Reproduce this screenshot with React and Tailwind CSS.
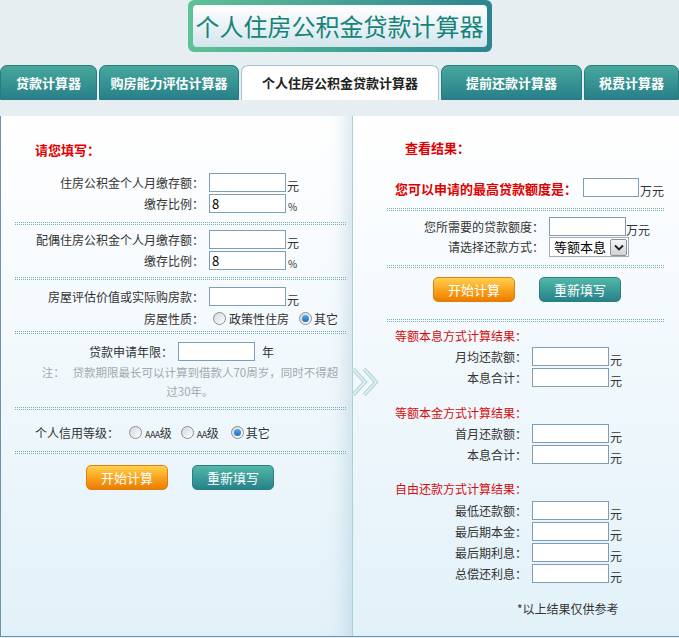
const FONT = "font-[family-name:'Noto_Sans_CJK_SC','Noto_Sans',sans-serif]";

function Box({ value = "", w = "w-[77px]" }) {
  return (
    <input
      readOnly
      value={value}
      className={`${w} h-[19px] shrink-0 border border-[#7f9db9] bg-white px-[2px] text-[13px] leading-[17px] text-black outline-none`}
    />
  );
}

function Field({ label, lw, value = "", unit, small }) {
  return (
    <div className="flex h-[21px]">
      <div className={`${lw} shrink-0 pr-[5px] text-right leading-[19px] whitespace-nowrap`}>{label}</div>
      <Box value={value} />
      {unit && (
        <span className={small ? "pl-[2px] pt-[4px] text-[10px] leading-[17px]" : "pl-[1px] pt-[3px] leading-[19px]"}>
          {unit}
        </span>
      )}
    </div>
  );
}

function Radio({ checked }) {
  return (
    <span className="flex h-[13px] w-[13px] shrink-0 items-center justify-center rounded-full border border-[#8a8f94] bg-linear-to-br from-[#d4d6d8] to-white">
      {checked && <span className="h-[7px] w-[7px] rounded-full bg-linear-to-b from-[#55a8e8] to-[#1a6fc0]" />}
    </span>
  );
}

function Dots({ cls }) {
  return <div className={`${cls} h-[3px] border-y border-dotted border-[#78b0b2]`} />;
}

function OrangeBtn() {
  return (
    <button className="h-[25px] w-[82px] rounded-[5px] border border-[#e0800c] bg-linear-to-b from-[#ffd04c] via-[#f9a51c] to-[#ec7c00] text-[13px] text-white">
      开始计算
    </button>
  );
}

function TealBtn() {
  return (
    <button className="h-[25px] w-[82px] rounded-[5px] border border-[#2b7f80] bg-linear-to-b from-[#52b8a8] to-[#26828a] text-[13px] text-white">
      重新填写
    </button>
  );
}

function Tab({ label, w, active }) {
  return active ? (
    <div className={`${w} flex items-center justify-center rounded-t-[7px] border border-b-0 border-[#a8c3cb] bg-white text-[13px] font-bold text-[#222]`}>
      {label}
    </div>
  ) : (
    <div className={`${w} flex items-center justify-center rounded-t-[7px] border border-[#2a7b7e] bg-linear-to-b from-[#47a89c] to-[#27808a] text-[13px] font-bold text-white`}>
      {label}
    </div>
  );
}

export default function App() {
  return (
    <div className={`${FONT} h-[638px] w-[679px] overflow-hidden bg-[#e6eef1] text-[12px] text-[#333]`}>
      {/* title banner */}
      <div className="flex justify-center">
        <div className="h-[52px] w-[304px] rounded-[6px] bg-linear-to-r from-[#5fc196] to-[#2a8590] p-[5px]">
          <div className="flex h-full items-center justify-center rounded-[4px] bg-linear-to-b from-white to-[#d3e5ec] text-[24px] text-[#17837a]">
            个人住房公积金贷款计算器
          </div>
        </div>
      </div>

      {/* tabs */}
      <div className="mt-[13px] flex h-[35px] gap-[2px]">
        <Tab label="贷款计算器" w="w-[97px]" />
        <Tab label="购房能力评估计算器" w="w-[140px]" />
        <Tab label="个人住房公积金贷款计算器" w="w-[198px]" active />
        <Tab label="提前还款计算器" w="w-[141px]" />
        <Tab label="税费计算器" w="w-[95px]" />
      </div>
      <div className="h-[16px]" />

      {/* panel */}
      <div className="relative flex h-[521px] border-b border-[#6f93a4]">
        {/* left */}
        <div className="w-[352px] shrink-0 border-l border-[#6f93a4] bg-linear-to-b from-white to-[#e2f1f9] pt-[24px] shadow-[inset_-22px_0_18px_-16px_rgba(140,180,200,0.35)]">
          <div className="ml-[34px] h-[20px] text-[13px] font-bold leading-[20px] text-[#e00000]">请您填写：</div>

          <div className="mt-[13px]">
            <Field label="住房公积金个人月缴存额：" lw="w-[208px]" unit="元" />
            <Field label="缴存比例：" lw="w-[208px]" value="8" unit="%" small />
          </div>
          <Dots cls="ml-[14px] mt-[7px] w-[331px]" />

          <div className="mt-[5px]">
            <Field label="配偶住房公积金个人月缴存额：" lw="w-[208px]" unit="元" />
            <Field label="缴存比例：" lw="w-[208px]" value="8" unit="%" small />
          </div>
          <Dots cls="ml-[14px] mt-[5px] w-[331px]" />

          <div className="mt-[7px]">
            <Field label="房屋评估价值或实际购房款：" lw="w-[208px]" unit="元" />
            <div className="flex h-[21px] items-center">
              <div className="w-[208px] shrink-0 pr-[5px] text-right">房屋性质：</div>
              <span className="ml-[4px]"><Radio /></span>
              <span className="ml-[3px]">政策性住房</span>
              <span className="ml-[10px]"><Radio checked /></span>
              <span className="ml-[2px]">其它</span>
            </div>
          </div>
          <Dots cls="ml-[14px] mt-[2px] w-[331px]" />

          <div className="mt-[8px]">
            <div className="flex h-[21px]">
              <div className="w-[177px] shrink-0 pr-[5px] text-right leading-[19px]">贷款申请年限：</div>
              <Box />
              <span className="pl-[7px] leading-[19px]">年</span>
            </div>
            <div className="ml-[30px] w-[318px] text-center text-[11.5px] leading-[19px] text-[#a3a8ab]">
              <div className="whitespace-nowrap">注：&nbsp;&nbsp;&nbsp;贷款期限最长可以计算到借款人70周岁，同时不得超</div>
              <div>过30年。</div>
            </div>
          </div>
          <Dots cls="ml-[14px] mt-[6px] w-[331px]" />

          <div className="mt-[12px] flex h-[21px] items-center pl-[34px]">
            <span>个人信用等级：</span>
            <span className="ml-[10px]"><Radio /></span>
            <span className="ml-[3px]"><span className="text-[9px] tracking-[-0.5px]">AAA</span>级</span>
            <span className="ml-[9px]"><Radio /></span>
            <span className="ml-[3px]"><span className="text-[9px] tracking-[-0.5px]">AA</span>级</span>
            <span className="ml-[12px]"><Radio checked /></span>
            <span className="ml-[2px]">其它</span>
          </div>
          <Dots cls="ml-[14px] mt-[8px] w-[331px]" />

          <div className="ml-[85px] mt-[11px] flex gap-[24px]">
            <OrangeBtn />
            <TealBtn />
          </div>
        </div>

        {/* right */}
        <div className="flex-1 border-l border-[#aacfd5] bg-linear-to-b from-white to-[#e2f1f9] pt-[22px]">
          <div className="ml-[52px] h-[20px] text-[13px] font-bold leading-[20px] text-[#e00000]">查看结果：</div>

          <div className="mt-[20px] flex h-[21px] pl-[42px]">
            <span className="w-[188px] shrink-0 text-[13px] font-bold leading-[21px] text-[#e00000] whitespace-nowrap">您可以申请的最高贷款额度是：</span>
            <Box w="w-[56px]" />
            <span className="pl-[1px] pt-[3px] leading-[19px]">万元</span>
          </div>
          <Dots cls="ml-[34px] mt-[9px] w-[277px]" />

          <div className="mt-[6px]">
            <div className="flex h-[20px]">
              <div className="w-[196px] shrink-0 pr-[5px] text-right leading-[19px]">您所需要的贷款额度：</div>
              <Box />
              <span className="pt-[3px] leading-[19px]">万元</span>
            </div>
            <div className="flex h-[20px] items-center">
              <div className="w-[196px] shrink-0 pr-[5px] text-right">请选择还款方式：</div>
              <div className="flex h-[20px] w-[80px] items-center justify-between border border-[#a5acb2] bg-white pl-[4px] pr-[1px]">
                <span className="text-[13px] leading-[18px] text-black">等额本息</span>
                <span className="flex h-[17px] w-[17px] items-center justify-center rounded-[2px] border border-[#8c9196] bg-linear-to-b from-[#f6f6f6] to-[#cfd2d5]">
                  <svg width="10" height="7" viewBox="0 0 10 7">
                    <path d="M1 1.5 L5 5.5 L9 1.5" fill="none" stroke="#222" strokeWidth="1.8" />
                  </svg>
                </span>
              </div>
            </div>
          </div>
          <Dots cls="ml-[34px] mt-[8px] w-[277px]" />

          <div className="ml-[80px] mt-[9px] flex gap-[24px]">
            <OrangeBtn />
            <TealBtn />
          </div>
          <Dots cls="ml-[34px] mt-[17px] w-[277px]" />

          <div className="ml-[42px] mt-[4px] h-[20px] leading-[20px] text-[#d60c0c]">等额本息方式计算结果：</div>
          <div className="mt-[1px]">
            <Field label="月均还款额：" lw="w-[179px]" unit="元" />
            <Field label="本息合计：" lw="w-[179px]" unit="元" />
          </div>

          <div className="ml-[42px] mt-[14px] h-[20px] leading-[20px] text-[#d60c0c]">等额本金方式计算结果：</div>
          <div className="mt-[1px]">
            <Field label="首月还款额：" lw="w-[179px]" unit="元" />
            <Field label="本息合计：" lw="w-[179px]" unit="元" />
          </div>

          <div className="ml-[42px] mt-[13px] h-[20px] leading-[20px] text-[#d60c0c]">自由还款方式计算结果：</div>
          <div className="mt-[2px]">
            <Field label="最低还款额：" lw="w-[179px]" unit="元" />
            <Field label="最后期本金：" lw="w-[179px]" unit="元" />
            <Field label="最后期利息：" lw="w-[179px]" unit="元" />
            <Field label="总偿还利息：" lw="w-[179px]" unit="元" />
          </div>

          <div className="ml-[164px] mt-[14px] h-[20px] leading-[20px]">*以上结果仅供参考</div>
        </div>

        {/* chevrons over divider */}
        <svg className="absolute left-[352px] top-[252px]" width="28" height="28" viewBox="0 0 28 28">
          <path d="M1 1 L13 14 L1 27" fill="none" stroke="#b4d6db" strokeWidth="4" />
          <path d="M1 1 L13 14 L1 27" fill="none" stroke="#e4f2f4" strokeWidth="1.5" />
          <path d="M12 1 L24 14 L12 27" fill="none" stroke="#b4d6db" strokeWidth="4" />
          <path d="M12 1 L24 14 L12 27" fill="none" stroke="#e4f2f4" strokeWidth="1.5" />
        </svg>
      </div>
    </div>
  );
}
